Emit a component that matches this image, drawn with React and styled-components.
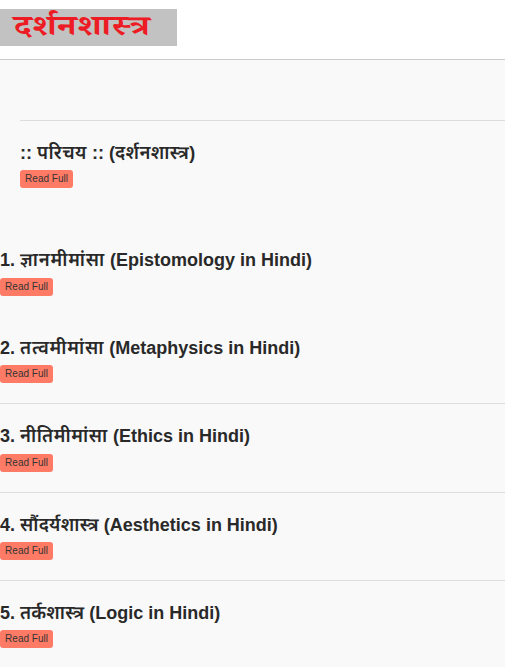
import React from 'react';
import styled, { createGlobalStyle } from 'styled-components';

const GlobalStyle = createGlobalStyle`
  body {
    margin: 0;
    background: #f9f9f9;
    color: #292929;
    font-family: "Liberation Sans", "Noto Sans Devanagari", "Noto Sans", sans-serif;
  }
`
const Header = styled.header`
  box-sizing: border-box;
  height: 60px;
  padding-top: 9px;
  background: #fff;
  border-bottom: 1px solid #ccc;
`
const Logo = styled.div`
  box-sizing: border-box;
  width: 177px;
  height: 37px;
  padding: 4px 0 0 14px;
  background: #c2c2c2;
`
const LogoText = styled.span`
  display: inline-block;
  color: #ed1c24;
  font-family: "Noto Serif Devanagari", "Lohit Devanagari", "FreeSerif", serif;
  font-size: 28px;
  font-weight: bold;
  line-height: 37px;
  letter-spacing: 0.5px;
  white-space: nowrap;
  transform: scaleX(1.255);
  transform-origin: left;
`
const Intro = styled.section`
  box-sizing: border-box;
  height: 107px;
  margin: 60px 0 0 20px;
  padding-top: 22px;
  border-top: 1px solid #ddd;
`
const Topic = styled.section`
  box-sizing: border-box;
  height: ${({ $height }) => $height || 88}px;
  padding-top: 22px;
  border-top: 1px solid ${({ $line }) => ($line ? '#ddd' : 'transparent')};
`
const Title = styled.h2`
  margin: 0 0 ${({ $gap }) => $gap || 7}px;
  height: 20px;
  font-size: 18px;
  line-height: 20px;
  white-space: nowrap;
`
const Hindi = styled.span`
  font-size: 18.5px;
  font-weight: 600;
  letter-spacing: ${({ $spacing }) => $spacing || 0}px;
`
const Button = styled.button`
  display: block;
  width: 53px;
  height: 18px;
  padding: 0;
  border: 0;
  border-radius: 3px;
  background: #ff7b66;
  color: #333;
  font: 10px/18px "Liberation Sans", sans-serif;
`

const topics = [
  { number: 1, hindi: 'ज्ञानमीमांसा', english: 'Epistomology', spacing: 0.8, gap: 8 },
  { number: 2, hindi: 'तत्वमीमांसा', english: 'Metaphysics', spacing: 0.8 },
  { number: 3, hindi: 'नीतिमीमांसा', english: 'Ethics', spacing: 0.65, gap: 8, height: 89, line: true },
  { number: 4, hindi: 'सौंदर्यशास्त्र', english: 'Aesthetics', spacing: 0.25, line: true },
  { number: 5, hindi: 'तर्कशास्त्र', english: 'Logic', spacing: 0.15, line: true },
];

function App() {
  return (
    <>
      <GlobalStyle />
      <Header><Logo><LogoText>दर्शनशास्त्र</LogoText></Logo></Header>
      <Intro>
        <Title>
          :: <Hindi $spacing={0.5}>परिचय</Hindi> :: (<Hindi $spacing={0.4}>दर्शनशास्त्र</Hindi>)
        </Title>
        <Button>Read Full</Button>
      </Intro>
      {topics.map(({ number, hindi, english, spacing, gap, height, line }) => (
        <Topic key={number} $line={line} $height={height}>
          <Title $gap={gap}>
            {`${number}. `}<Hindi $spacing={spacing}>{hindi}</Hindi>{` (${english} in Hindi)`}
          </Title>
          <Button>Read Full</Button>
        </Topic>
      ))}
    </>
  )
}

export default App;
